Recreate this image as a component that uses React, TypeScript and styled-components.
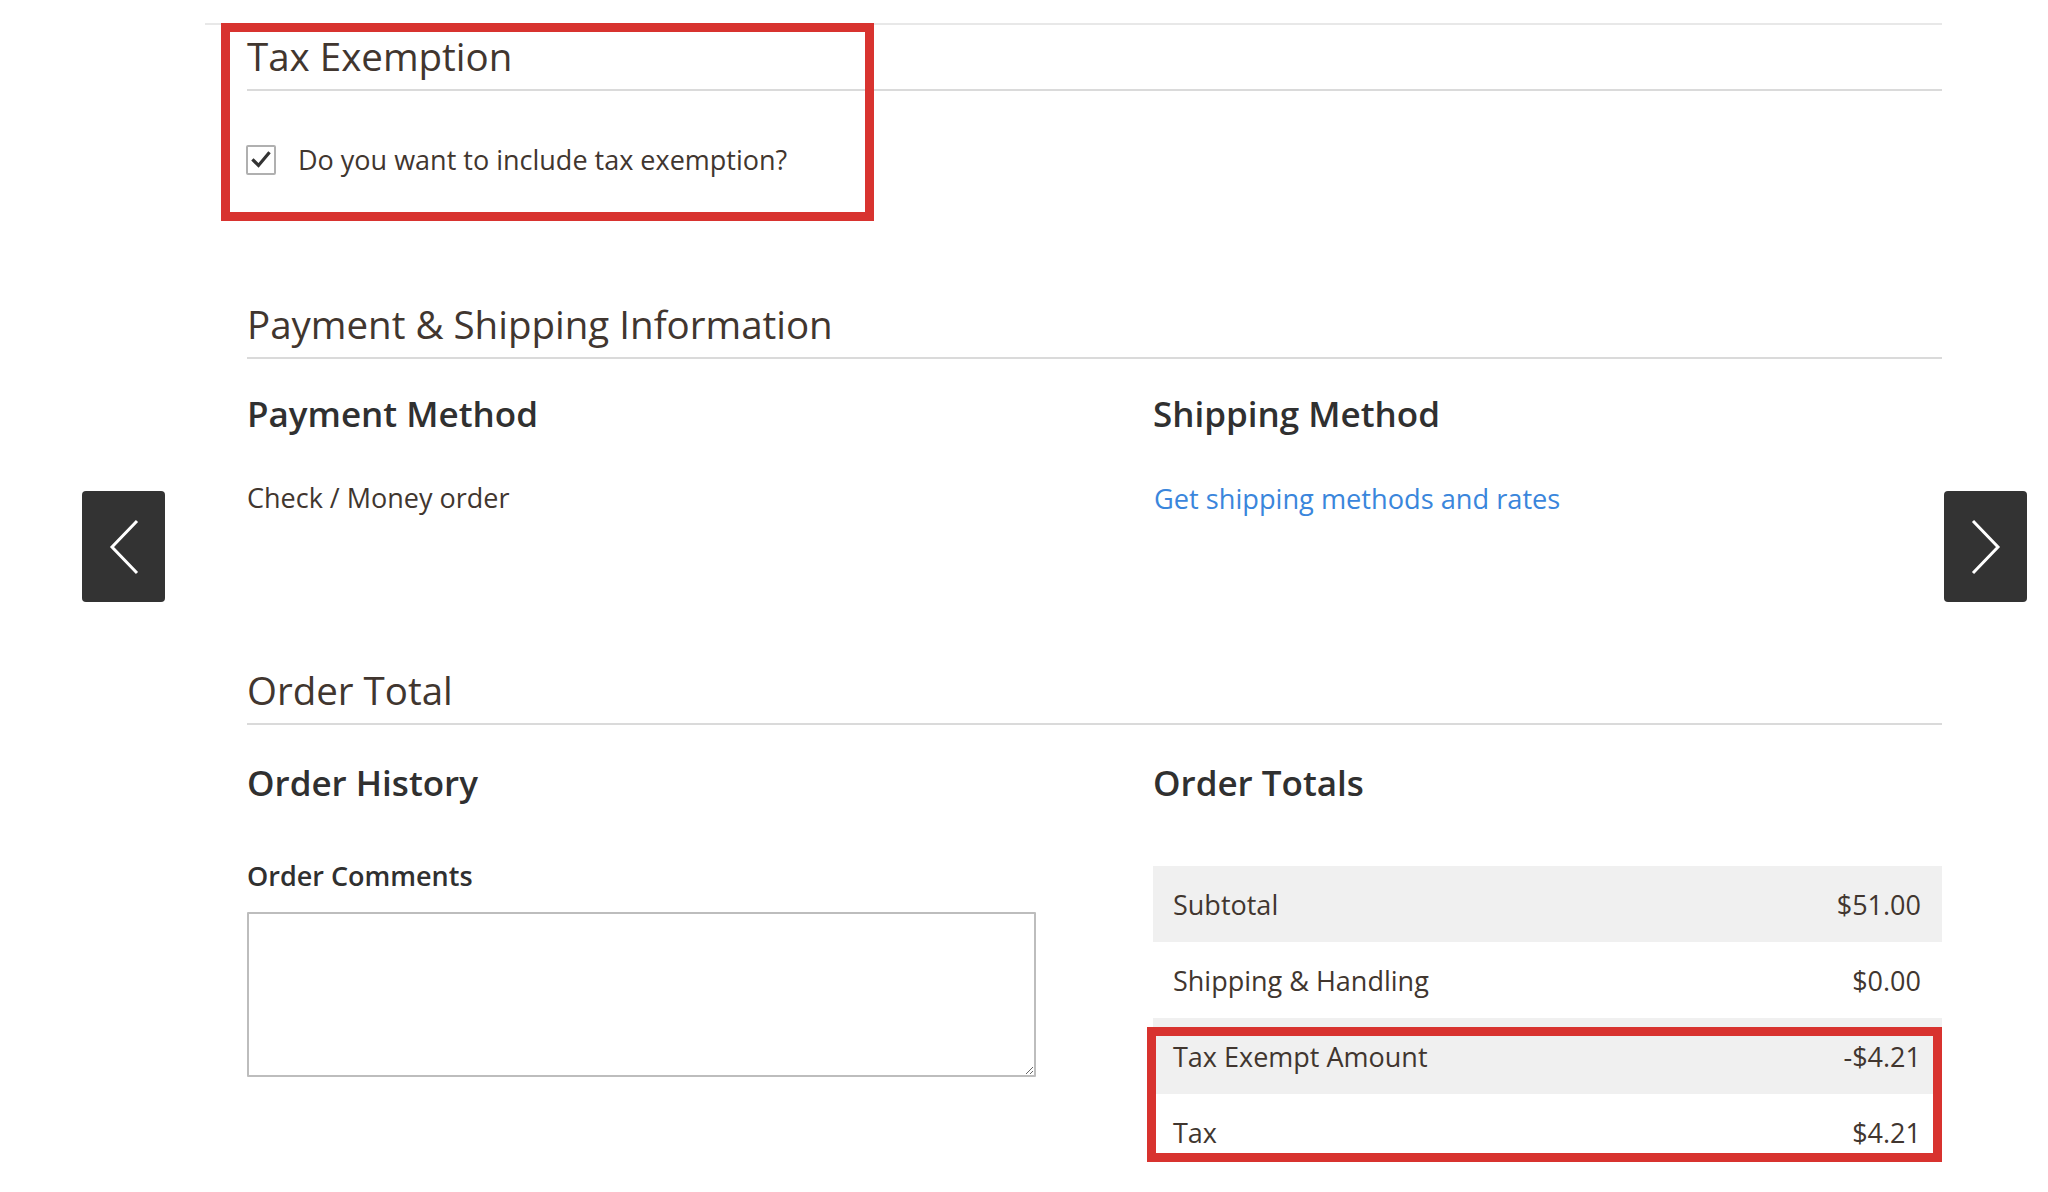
import React from "react";
import styled, { createGlobalStyle } from "styled-components";

const Global = createGlobalStyle`
  html, body { margin: 0; padding: 0; background: #ffffff; }
  body { font-family: "Open Sans", "Noto Sans", sans-serif; color: #41362f; }
  #root { width: 2048px; height: 1192px; overflow: hidden; }
  * { box-sizing: border-box; }
`;

const Page = styled.div`
  position: relative;
  width: 2048px;
  height: 1192px;
  padding-top: 23px;
`;

const Container = styled.div`
  margin-left: 205px;
  width: 1737px;
  border-top: 2px solid #e8e8e8;
  padding-left: 42px;
`;

const Section = styled.section<{ $top: number }>`
  position: relative;
  margin-top: ${(p) => p.$top}px;
`;

const SectionTitle = styled.h2`
  margin: 0;
  font-size: 38.5px;
  line-height: 46px;
  font-weight: 400;
  color: #41362f;
  padding-bottom: 10px;
  border-bottom: 2px solid #dadada;
`;

const CheckRow = styled.label`
  display: flex;
  align-items: center;
  gap: 22px;
  margin-top: 51px;
  height: 36px;
  font-size: 27px;
  line-height: 36px;
  color: #41362f;
`;

const CheckBox = styled.span`
  display: flex;
  align-items: center;
  justify-content: center;
  width: 30px;
  height: 30px;
  border: 2px solid #b0b0b0;
  border-radius: 2px;
  background: #fff;
  margin-left: -1px;
`;

const Annotation = styled.div<{ $l: number; $t: number; $w: number; $h: number }>`
  position: absolute;
  left: ${(p) => p.$l}px;
  top: ${(p) => p.$t}px;
  width: ${(p) => p.$w}px;
  height: ${(p) => p.$h}px;
  border: 9px solid #d8332f;
  pointer-events: none;
`;

const Columns = styled.div<{ $top: number }>`
  display: grid;
  grid-template-columns: 789px 789px;
  column-gap: 117px;
  margin-top: ${(p) => p.$top}px;
`;

const Column = styled.div`
  display: flex;
  flex-direction: column;
`;

const ItemTitle = styled.h3`
  margin: 0;
  font-size: 35px;
  line-height: 40px;
  font-weight: 600;
  color: #303030;
`;

const Text = styled.div`
  margin-top: 46px;
  font-size: 27px;
  line-height: 36px;
  color: #41362f;
`;

const Link = styled.a`
  display: block;
  margin-top: 47px;
  margin-left: 1px;
  font-size: 27.2px;
  line-height: 36px;
  color: #3a86dc;
  text-decoration: none;
  cursor: pointer;
`;

const FieldLabel = styled.div`
  margin-top: 56px;
  font-size: 27px;
  line-height: 34px;
  font-weight: 600;
  color: #303030;
`;

const Comments = styled.textarea`
  display: block;
  margin-top: 19px;
  width: 789px;
  height: 165px;
  border: 2px solid #bdbdbd;
  border-radius: 1px;
  font-family: "Open Sans", sans-serif;
  font-size: 24px;
  padding: 10px;
  resize: vertical;
  background: #fff;
`;

const TotalsTable = styled.div`
  position: relative;
  margin-top: 63px;
  display: flex;
  flex-direction: column;
`;

const TotalRow = styled.div<{ $shaded: boolean }>`
  display: flex;
  align-items: center;
  justify-content: space-between;
  height: 76px;
  padding: 0 21px 0 20px;
  font-size: 27px;
  color: #41362f;
  background: ${(p) => (p.$shaded ? "#f0f0f0" : "#ffffff")};
`;

const NavButton = styled.button<{ $side: "left" | "right" }>`
  position: absolute;
  top: 491px;
  ${(p) => (p.$side === "left" ? "left: 82px;" : "left: 1944px;")}
  width: 83px;
  height: 111px;
  border: none;
  border-radius: 4px;
  background: #333333;
  display: flex;
  align-items: center;
  justify-content: center;
  padding: 0;
  cursor: pointer;
`;

const totals = [
  { label: "Subtotal", value: "$51.00" },
  { label: "Shipping & Handling", value: "$0.00" },
  { label: "Tax Exempt Amount", value: "-$4.21" },
  { label: "Tax", value: "$4.21" },
];

export default function App() {
  return (
    <Page>
      <Global />
      <Container>
        <Section $top={8}>
          <SectionTitle>Tax Exemption</SectionTitle>
          <CheckRow>
            <CheckBox>
              <svg width="20" height="18" viewBox="0 0 20 18">
                <path d="M2.5 9.5 L7.5 14.5 L17.5 2.5" fill="none" stroke="#333" strokeWidth="3.2" strokeLinecap="square" />
              </svg>
            </CheckBox>
            Do you want to include tax exemption?
          </CheckRow>
          <Annotation $l={-26} $t={-10} $w={653} $h={198} />
        </Section>

        <Section $top={123}>
          <SectionTitle>Payment &amp; Shipping Information</SectionTitle>
          <Columns $top={35}>
            <Column>
              <ItemTitle>Payment Method</ItemTitle>
              <Text>Check / Money order</Text>
            </Column>
            <Column>
              <ItemTitle>Shipping Method</ItemTitle>
              <Link>Get shipping methods and rates</Link>
            </Column>
          </Columns>
        </Section>

        <Section $top={150}>
          <SectionTitle>Order Total</SectionTitle>
          <Columns $top={38}>
            <Column>
              <ItemTitle>Order History</ItemTitle>
              <FieldLabel>Order Comments</FieldLabel>
              <Comments />
            </Column>
            <Column>
              <ItemTitle>Order Totals</ItemTitle>
              <TotalsTable>
                {totals.map((r, i) => (
                  <TotalRow key={r.label} $shaded={i % 2 === 0}>
                    <span>{r.label}</span>
                    <span>{r.value}</span>
                  </TotalRow>
                ))}
                <Annotation $l={-6} $t={161} $w={795} $h={135} />
              </TotalsTable>
            </Column>
          </Columns>
        </Section>
      </Container>

      <NavButton $side="left" aria-label="Previous">
        <svg width="34" height="58" viewBox="0 0 34 58">
          <path d="M30 3 L5 29 L30 55" fill="none" stroke="#fff" strokeWidth="3" />
        </svg>
      </NavButton>
      <NavButton $side="right" aria-label="Next">
        <svg width="34" height="58" viewBox="0 0 34 58">
          <path d="M4 3 L29 29 L4 55" fill="none" stroke="#fff" strokeWidth="3" />
        </svg>
      </NavButton>
    </Page>
  );
}
